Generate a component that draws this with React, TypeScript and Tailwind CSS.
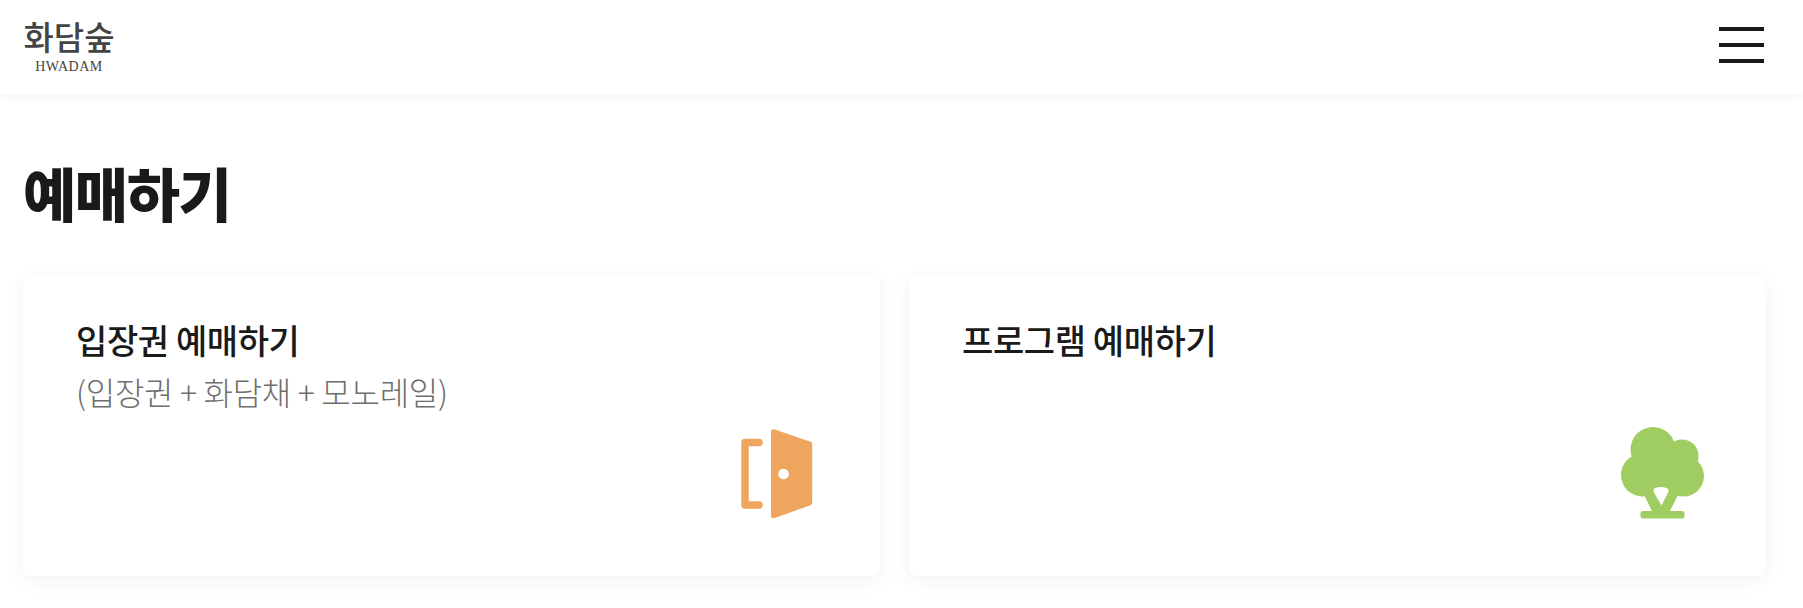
import React from "react";

const kr = "font-['Noto_Sans_CJK_KR','Noto_Sans',sans-serif]";

function Door() {
  return (
    <svg width="72" height="90" viewBox="0 0 72 90" className="block">
      <path d="M18 13.5H4V76H18" fill="none" stroke="#eea55d" strokeWidth="7.5" strokeLinecap="round" strokeLinejoin="round" />
      <path
        fillRule="evenodd"
        fill="#eea55d"
        d="M30 2.5C30 .7 31.4 -.3 33 .3L69.5 12.8C70.7 13.2 71.2 14 71.2 15V74C71.2 75 70.7 75.8 69.5 76.2L33 89.2C31.4 89.8 30 88.8 30 87ZM47.9 45A5.3 5.3 0 1 0 37.3 45A5.3 5.3 0 1 0 47.9 45Z"
      />
    </svg>
  );
}

function Tree() {
  return (
    <svg width="84" height="92" viewBox="0 0 84 92" className="block">
      <g fill="#a0cd62">
        <circle cx="32" cy="22.5" r="22.5" />
        <circle cx="61" cy="29" r="16.5" />
        <circle cx="21.5" cy="48" r="21.5" />
        <circle cx="62.5" cy="49" r="20.5" />
        <rect x="24" y="22" width="36" height="46" />
        <path d="M20 62H60L48 86H32Z" />
        <rect x="19.5" y="84" width="44" height="7.5" rx="2.5" />
      </g>
      <path d="M33.5 61.5C36 59.5 43 59.5 46.5 61.5C47.7 62.5 47.9 63.8 47.3 65L40.5 78.5 32.9 65.5C32.3 64 32.5 62.5 33.5 61.5Z" fill="#fff" />
    </svg>
  );
}

function Card({ title, sub, icon, right }: { title: string; sub?: string; icon: React.ReactNode; right: string }) {
  return (
    <div className="flex h-[300px] w-full flex-col rounded-lg bg-white pl-[53px] pt-[41px] shadow-[0_4px_20px_rgba(0,0,0,0.06)]">
      <div className="text-[34px] leading-[46px] font-medium tracking-[-0.4px] text-[#1a1a1a]">{title}</div>
      {sub && <div className="mt-[5px] text-[32px] leading-[46px] font-light tracking-[-0.3px] text-[#6e6e6e]">{sub}</div>}
      <div className={`mt-auto mb-[57px] self-end ${right}`}>{icon}</div>
    </div>
  );
}

export default function App() {
  return (
    <div className={`h-[608px] w-[1803px] overflow-hidden bg-white ${kr}`}>
      <header className="flex h-[94px] items-center justify-between bg-white pl-[23px] pr-[39px] shadow-[0_2px_10px_rgba(0,0,0,0.05)]">
        <div className="flex w-[92px] flex-col items-center">
          <span className="mt-[-2px] text-[33px] leading-[36px] font-medium text-[#444]">화담숲</span>
          <span className="mt-[6px] font-['Liberation_Serif',serif] text-[14px] leading-[14px] tracking-[0.5px] text-[#444]">HWADAM</span>
        </div>
        <div className="mb-[4px] flex w-[45px] flex-col gap-[12px]">
          <span className="h-[4px] bg-[#1a1a1a]" />
          <span className="h-[4px] bg-[#1a1a1a]" />
          <span className="h-[4px] bg-[#1a1a1a]" />
        </div>
      </header>
      <main className="px-[23px]">
        <h1 className="mt-[59px] mb-[44px] h-[79px] text-[58px] leading-[79px] font-black tracking-[-1.5px] text-[#1a1a1a]">예매하기</h1>
        <div className="flex gap-[29px]">
          <div className="w-[857px]">
            <Card title="입장권 예매하기" sub="(입장권 + 화담채 + 모노레일)" icon={<Door />} right="mr-[67px]" />
          </div>
          <div className="w-[856px]">
            <Card title="프로그램 예매하기" icon={<Tree />} right="mr-[60px]" />
          </div>
        </div>
      </main>
    </div>
  );
}
